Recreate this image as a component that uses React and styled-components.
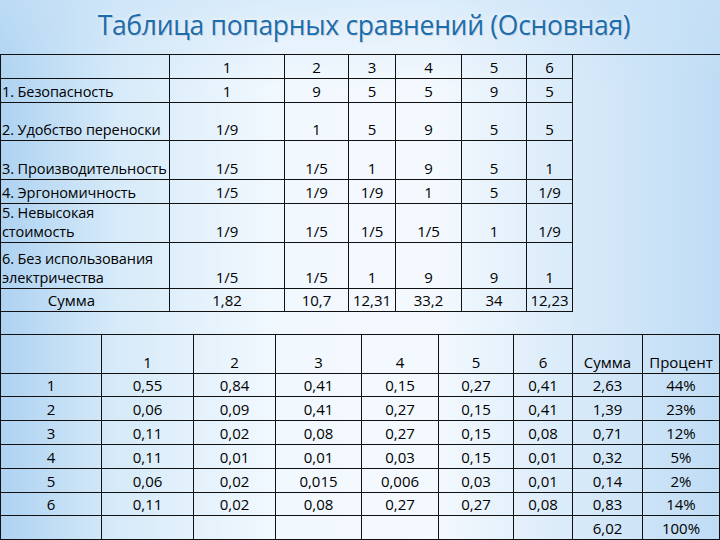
import React from 'react';
import styled, { createGlobalStyle } from 'styled-components';

const GlobalStyle = createGlobalStyle`
  html, body { margin: 0; padding: 0; }
  body {
    width: 720px;
    height: 540px;
    overflow: hidden;
    font-family: "Open Sans", "Liberation Sans", sans-serif;
    color: #000;
  }
  * { box-sizing: border-box; }
`;

const Slide = styled.div`
  width: 720px;
  height: 540px;
  display: flex;
  flex-direction: column;
  background:
    linear-gradient(180deg, rgba(200, 226, 247, 0.55) 0%, rgba(255, 255, 255, 0) 16%),
    linear-gradient(90deg, #add2f1 0%, #d6eaf9 16%, #f1f8fe 38%, #f4f9fe 60%, #d8eaf9 80%, #bfdcf5 100%);
`;

const Title = styled.h1`
  margin: 0;
  height: 54px;
  display: flex;
  align-items: center;
  justify-content: center;
  padding: 0 0 4px 8px;
  font-family: "Open Sans", "Liberation Sans", sans-serif;
  font-weight: 400;
  font-size: 26.5px;
  letter-spacing: -0.3px;
  color: #1d6dad;
  text-shadow: 0 0 4px rgba(255, 255, 255, 0.9), 1px 1px 1px rgba(0, 40, 90, 0.2);
`;

const TopArea = styled.div`
  height: 281px;
  border-top: 1px solid #111;
  border-left: 1px solid #111;
`;

const Grid = styled.div`
  display: grid;
  grid-template-columns: ${(p) => p.$cols};
  grid-template-rows: ${(p) => p.$rows};
  width: ${(p) => p.$width};
`;

const BottomArea = styled.div`
  border-top: 1px solid #111;
  border-left: 1px solid #111;
  flex: 1;
`;

const Cell = styled.div`
  border-right: 1px solid #111;
  border-bottom: 1px solid #111;
  display: flex;
  align-items: flex-end;
  justify-content: ${(p) => (p.$left ? 'flex-start' : 'center')};
  text-align: ${(p) => (p.$left ? 'left' : 'center')};
  padding: 0 ${(p) => (p.$padRight ? p.$padRight : 1)}px 1px 1px;
  font-size: ${(p) => (p.$left ? '14.5px' : '15px')};
  letter-spacing: ${(p) => (p.$left ? '-0.1px' : '0')};
  line-height: 19px;
  white-space: pre;
`;

const topRows = [
  ['', '1', '2', '3', '4', '5', '6'],
  ['1. Безопасность', '1', '9', '5', '5', '9', '5'],
  ['2. Удобство переноски', '1/9', '1', '5', '9', '5', '5'],
  ['3. Производительность', '1/5', '1/5', '1', '9', '5', '1'],
  ['4. Эргономичность', '1/5', '1/9', '1/9', '1', '5', '1/9'],
  ['5. Невысокая\nстоимость', '1/9', '1/5', '1/5', '1/5', '1', '1/9'],
  ['6. Без использования\nэлектричества', '1/5', '1/5', '1', '9', '9', '1'],
  ['Сумма', '1,82', '10,7', '12,31', '33,2', '34', '12,23'],
];

const bottomRows = [
  ['', '1', '2', '3', '4', '5', '6', 'Сумма', 'Процент'],
  ['1', '0,55', '0,84', '0,41', '0,15', '0,27', '0,41', '2,63', '44%'],
  ['2', '0,06', '0,09', '0,41', '0,27', '0,15', '0,41', '1,39', '23%'],
  ['3', '0,11', '0,02', '0,08', '0,27', '0,15', '0,08', '0,71', '12%'],
  ['4', '0,11', '0,01', '0,01', '0,03', '0,15', '0,01', '0,32', '5%'],
  ['5', '0,06', '0,02', '0,015', '0,006', '0,03', '0,01', '0,14', '2%'],
  ['6', '0,11', '0,02', '0,08', '0,27', '0,27', '0,08', '0,83', '14%'],
  ['', '', '', '', '', '', '', '6,02', '100%'],
];

const App = () => {
  return (
    <Slide>
      <GlobalStyle />
      <Title>Таблица попарных сравнений (Основная)</Title>
      <TopArea>
        <Grid
          $cols="169px 115px 64px 47px 66px 65px 46px"
          $rows="24px 24px 38px 39px 24px 39px 46px 23px"
          $width="572px"
        >
          {topRows.map((row, r) =>
            row.map((val, c) => {
              const isSum = r === topRows.length - 1 && c === 0;
              return (
                <Cell
                  key={`t${r}-${c}`}
                  $left={c === 0 && !isSum}
                  $padRight={isSum ? 28 : 0}
                >
                  {val}
                </Cell>
              );
            })
          )}
        </Grid>
      </TopArea>
      <BottomArea>
        <Grid
          $cols="101px 92px 82px 86px 77px 75px 59px 70px 77px"
          $rows="39px 23px 24px 24px 24px 24px 23px 24px"
          $width="719px"
        >
          {bottomRows.map((row, r) =>
            row.map((val, c) => <Cell key={`b${r}-${c}`}>{val}</Cell>)
          )}
        </Grid>
      </BottomArea>
    </Slide>
  );
};

export default App;
